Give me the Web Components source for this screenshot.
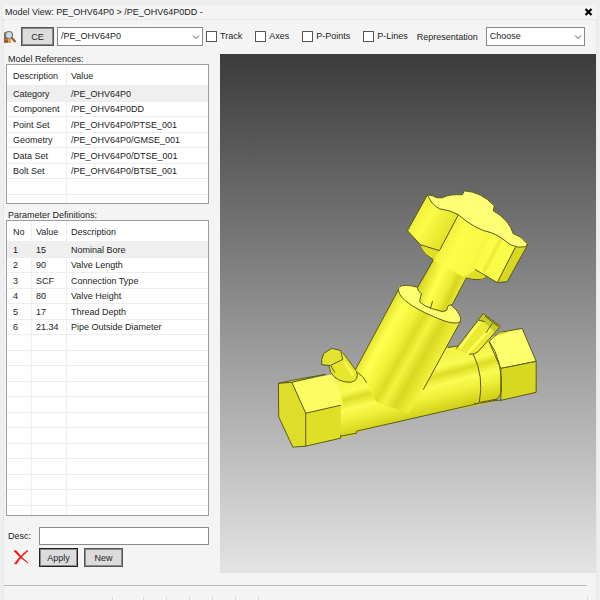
<!DOCTYPE html>
<html lang="en">
<head>
<meta charset="utf-8">
<title>Model View</title>
<style>
  html, body { height: 100%; }
  body { margin: 0; background: #eee; color: #1c1c1c; font: 9px/12px "Liberation Sans", Arial, sans-serif; }
</style>
</head>
<body>
<model-window heading="Model View: PE_OHV64P0 &gt; /PE_OHV64P0DD -">
  <view-toolbar slot="toolbar"></view-toolbar>
  <side-panel slot="side"></side-panel>
  <model-canvas slot="canvas"></model-canvas>
</model-window>

<script>
function define(name, html, setup) {
  const t = document.createElement('template');
  t.innerHTML = `<style>
    *, *::before { box-sizing: border-box; }
    button, select, input { font: inherit; color: inherit; margin: 0; border-radius: 0; }
    button { height: 19px; padding: 0; background: #dcdcdc; border: 1px solid #555; outline: 1px solid #8a8a8a; outline-offset: -2px; }
  </style>` + html;
  customElements.define(name, class extends HTMLElement {
    constructor() {
      super();
      this.attachShadow({ mode: 'open' }).append(t.content.cloneNode(true));
    }
    connectedCallback() { if (setup) setup(this, this.shadowRoot); }
  });
}

define('model-window', `
<style>
  :host { display: flex; flex-direction: column; min-height: 100vh; box-sizing: border-box; padding: 5px 3px 0; }
  header { display: flex; align-items: center; justify-content: space-between; height: 15px; padding: 0 4px 0 2px; background: #f4f4f4; border-bottom: 1px dotted #dadada; }
  h1 { font: inherit; margin: 0; }
  header button { width: 9px; height: 9px; background: none; border: 0; outline: 0; display: flex; }
  .frame { flex: 1; display: flex; flex-direction: column; background: #f4f4f4; border: 1px dotted #dadada; border-width: 0 1px; }
  .main { flex: 1; display: grid; grid-template-columns: 216px 1fr; }
  hr { width: calc(100% - 9px); margin: 12px 9px 0 0; border: 0; border-top: 1px solid #b9b9b9; }
  footer { display: flex; align-items: flex-end; height: 14px; }
  footer i { height: 3px; border-right: 1px solid #d8d8d8; }
  footer i:nth-child(1) { width: 109px; } footer i:nth-child(2) { width: 31px; }
  footer i:nth-child(n+3) { width: 23px; } footer i:last-child { flex: 1; margin-right: 8px; }
</style>
<header><h1></h1>
  <button aria-label="Close"><svg width="9" height="9" viewBox="0 0 9 9"><path d="M1.5 1L7.5 7M7.5 1L1.5 7" stroke="#000" stroke-width="2.2"/></svg></button>
</header>
<div class="frame">
  <slot name="toolbar"></slot>
  <div class="main"><slot name="side"></slot><slot name="canvas"></slot></div>
  <hr>
  <footer><i></i><i></i><i></i><i></i><i></i><i></i><i></i><i></i></footer>
</div>`, (el, root) => { root.querySelector('h1').textContent = el.getAttribute('heading'); });

define('check-box', `
<style>
  :host { display: block; }
  label { display: flex; align-items: center; gap: 3px; white-space: nowrap; }
  input { appearance: none; width: 11px; height: 11px; background: #fff; border: 1px solid #555; }
  input:checked { background: #555; }
  span { padding-bottom: 2px; }
</style>
<label><input type="checkbox"><span><slot></slot></span></label>`);

define('drop-down', `
<style>
  :host { display: grid; align-items: center; }
  select, svg { grid-area: 1 / 1; }
  select { appearance: none; width: 100%; height: 19px; padding: 0 16px 2px 3px; background: #fff; border: 1px solid #8a8a8a; }
  svg { justify-self: end; margin-right: 3px; pointer-events: none; z-index: 1; }
</style>
<select><option></option></select>
<svg width="8" height="6" viewBox="0 0 8 6"><path d="M1 1.5L4 4.5L7 1.5" fill="none" stroke="#555"/></svg>`,
(el, root) => {
  root.querySelector('option').textContent = el.getAttribute('value');
  root.querySelector('select').setAttribute('aria-label', el.getAttribute('label'));
});

define('view-toolbar', `
<style>
  :host { display: flex; align-items: center; height: 33px; padding: 0 11px 1px 0; }
  .find { width: 12px; height: 14px; margin-right: 5px; }
  button { width: 33px; margin-right: 3px; }
  .name { width: 146px; margin-right: 3px; }
  .checks { display: flex; gap: 13px; margin-right: 9px; }
  .rep { flex: 1; margin-left: 8px; }
</style>
<svg class="find" viewBox="0 0 12 14">
  <path d="M0 2.5L2.5 1.5L4 3V13H0Z" fill="#b8743c"/><path d="M0 5H4M0 8H4M0 11H4" stroke="#6f4526"/>
  <circle cx="5" cy="5" r="3.5" fill="#c9dbe6" stroke="#777" stroke-width="1.2"/>
  <path d="M7.5 7.5L11.5 12" stroke="#93622e" stroke-width="2.2"/><path d="M4 9L7 8.5V13H4Z" fill="#d8a166"/>
</svg>
<button>CE</button>
<drop-down class="name" value="/PE_OHV64P0" label="Element"></drop-down>
<div class="checks"><check-box>Track</check-box><check-box>Axes</check-box><check-box>P-Points</check-box><check-box>P-Lines</check-box></div>
<span>Representation</span>
<drop-down class="rep" value="Choose" label="Representation"></drop-down>`);

define('data-grid', `
<style>
  :host { display: block; overflow: hidden; background: #fff; border: 1px solid #9a9ca3; box-sizing: border-box; }
  table { width: 100%; border-collapse: separate; border-spacing: 0; table-layout: fixed; }
  th, td { padding: 0 0 0 4px; font-weight: normal; text-align: left; white-space: nowrap; height: 15px; line-height: 12px; border-bottom: 1px solid #eee; }
  th:first-child, td:first-child { padding-left: 6px; }
  th:not(:last-child), td:not(:last-child) { border-right: 1px solid #eee; }
  th { height: 21px; padding-top: 2px; }
  tbody tr:nth-child(odd) td { height: 16px; }
  tbody tr:first-child td { background: #efefef; }
</style>
<table><colgroup></colgroup><thead><tr></tr></thead><tbody></tbody></table>`,
(el, root) => {
  const cols = el.getAttribute('columns').split(','), widths = el.getAttribute('widths').split(',');
  const rows = el.textContent.trim().split('\n').map(r => r.trim().split('|'));
  for (let i = +el.getAttribute('blank'); i > 0; i--) rows.push(cols.map(() => ''));
  root.querySelector('colgroup').innerHTML = cols.map((c, i) => `<col${widths[i] ? ` style="width:${widths[i]}px"` : ''}>`).join('');
  root.querySelector('thead tr').innerHTML = cols.map(c => `<th scope="col">${c}</th>`).join('');
  root.querySelector('tbody').innerHTML = rows.map(r => `<tr>${r.map(c => `<td>${c}</td>`).join('')}</tr>`).join('');
});

define('side-panel', `
<style>
  :host { display: flex; flex-direction: column; padding: 0 11px 6px 2px; }
  h2 { font: inherit; line-height: 10px; margin: 0; padding-left: 2px; }
  .refs { height: 140px; margin-bottom: 6px; }
  .params { flex: 1 1 0; min-height: 120px; }
  form { display: grid; grid-template-columns: 28px 1fr; gap: 3px 4px; align-items: center; padding: 11px 0 0 1px; }
  label { padding-left: 1px; }
  input { width: 100%; height: 18px; background: #fff; border: 1px solid #8a8a8a; }
  .actions { display: flex; gap: 6px; }
  .actions button { width: 39px; } .actions button:first-child { border-color: #222; }
  .del { width: 16px; height: 16px; border: 0; outline: 0; background: none; justify-self: center; }
  .del svg { display: block; }
</style>
<h2>Model References:</h2>
<data-grid class="refs" columns="Description,Value" widths="60," blank="2">
  Category|/PE_OHV64P0
  Component|/PE_OHV64P0DD
  Point Set|/PE_OHV64P0/PTSE_001
  Geometry|/PE_OHV64P0/GMSE_001
  Data Set|/PE_OHV64P0/DTSE_001
  Bolt Set|/PE_OHV64P0/BTSE_001
</data-grid>
<h2>Parameter Definitions:</h2>
<data-grid class="params" columns="No,Value,Description" widths="25,35," blank="12">
  1|15|Nominal Bore
  2|90|Valve Length
  3|SCF|Connection Type
  4|80|Valve Height
  5|17|Thread Depth
  6|21.34|Pipe Outside Diameter
</data-grid>
<form onsubmit="return false">
  <label for="desc">Desc:</label><input id="desc">
  <button class="del" type="button" aria-label="Delete"><svg width="16" height="16" viewBox="0 0 16 16"><path d="M1 1L3 0.5Q8 7 15 13Q7 8 1 1ZM14 0.5L15 1Q7 7 3.5 14L1.5 13.5Q7 6 14 0.5Z" fill="#f01810" stroke="#f01810" stroke-width=".7"/></svg></button>
  <div class="actions"><button type="button">Apply</button><button type="button">New</button></div>
</form>`);

define('model-canvas', `
<style>
  :host { display: flex; background: linear-gradient(#3b3b3b, #e4e4e4); }
  svg { width: 100%; height: auto; }
  .edge, [stroke="#45450c"] { stroke: #5a5a18; }
</style>
<svg viewBox="220 53 377 520" role="img" aria-label="Valve model" stroke-linejoin="round" stroke-linecap="round">
  <defs>
    <linearGradient id="pipe" gradientUnits="userSpaceOnUse" x1="395" y1="350" x2="413" y2="418">
      <stop offset="0" stop-color="#e5e52c"/><stop offset=".2" stop-color="#f3f341"/><stop offset=".4" stop-color="#fafa54"/><stop offset=".5" stop-color="#dddd25"/><stop offset=".64" stop-color="#fbfb52"/><stop offset=".8" stop-color="#eeee38"/><stop offset="1" stop-color="#d2d21d"/>
    </linearGradient>
    <linearGradient id="cyl" gradientUnits="userSpaceOnUse" x1="378" y1="328" x2="438" y2="362">
      <stop offset="0" stop-color="#e4e42b"/><stop offset=".15" stop-color="#ffff50"/><stop offset=".35" stop-color="#f3f33c"/><stop offset=".5" stop-color="#dcdc23"/><stop offset=".62" stop-color="#f4f440"/><stop offset=".78" stop-color="#d8d822"/><stop offset="1" stop-color="#f2f23a"/>
    </linearGradient>
    <linearGradient id="stem" gradientUnits="userSpaceOnUse" x1="424" y1="278" x2="460" y2="294">
      <stop offset="0" stop-color="#dada22"/><stop offset=".35" stop-color="#ffff4e"/><stop offset=".65" stop-color="#ecec36"/><stop offset=".8" stop-color="#d5d51e"/><stop offset="1" stop-color="#efef37"/>
    </linearGradient>
    <linearGradient id="hub" gradientUnits="userSpaceOnUse" x1="440" y1="228" x2="500" y2="262">
      <stop offset="0" stop-color="#e9e933"/><stop offset=".35" stop-color="#fdfd4b"/><stop offset=".75" stop-color="#f6f642"/><stop offset="1" stop-color="#eaea30"/>
    </linearGradient>
    <linearGradient id="wing" gradientUnits="userSpaceOnUse" x1="414" y1="212" x2="448" y2="232">
      <stop offset="0" stop-color="#eeee36"/><stop offset=".4" stop-color="#fbfb4a"/><stop offset="1" stop-color="#e4e42a"/>
    </linearGradient>
  </defs>
  <!-- run pipe -->
  <path d="M326 376L356 370L390 360L449 347L462 345L476 350L490 338Q508 366 501 396Q495 402 486 403L479 405L420 416L357 432L356 435L340 438Z" fill="url(#pipe)"/>
  <path d="M449 347L462 345M341 436L357 433L357 431L480 403L498 400" fill="none" stroke="#45450c"/>
  <path d="M474 354Q485 376 480 402Q477 405 475 403M481 402L497 399" fill="none" stroke="#45450c"/>
  <!-- left hex end -->
  <path d="M292 382L333 374L341 390V405L306 413Z" fill="#fcfc62"/>
  <path d="M279 383L292 380L326 374L292 382Z" fill="#dada2e" stroke="#45450c"/>
  <path d="M306 413L341 405V438L306 446Z" fill="#dfdf28"/>
  <path d="M279 383L292 382L306 413V446L293 447L279 417Z" fill="#dede2a" stroke="#45450c"/>
  <path d="M306 413L341 405M306 446L341 438V435" fill="none" stroke="#45450c"/>
  <path d="M334 374L342 373L343 406L341 405V390Z" fill="#f5f54a"/>
  <!-- left nipple -->
  <path d="M329 364L331 372Q337 382 351 382Q360 380 357 371L343 351Z" fill="#e6e62f"/>
  <path d="M345 362L353 374" stroke="#f8f84c" stroke-width="3"/>
  <path d="M329 365L331 372Q337 382 351 382Q360 380 357 371L343 352M331 365L335 372" fill="none" stroke="#45450c"/>
  <path d="M322 364V359L324 353L332 348L341 350L343 359L331 365Z" fill="#e2e233" stroke="#45450c"/>
  <!-- right hex end -->
  <path d="M490 341L500 332L523 328L537 361L502 368Z" fill="#ffff6b" stroke="#45450c"/>
  <path d="M490 341L500 332L512 331L493 336Z" fill="#caca28"/>
  <path d="M502 368L537 361V392L502 400Z" fill="#d8d823" stroke="#45450c"/>
  <path d="M490 341Q504 360 502 392Q499 400 494 400L502 400" fill="none" stroke="#45450c"/>
  <!-- right nipple -->
  <path d="M484 313L501 326L479 352Q471 357 457 348Z" fill="#eaea32"/>
  <path d="M482 319L461 347M491 328L469 352" stroke="#fbfb5c" stroke-width="3"/>
  <path d="M484 313L501 326L496 332L484 321L479 320Z" fill="#c9c925"/>
  <path d="M457 348L484 313L501 326L479 351Q476 354 470 354M486 316L499 326M493 323L487 332M480 320L485 321" fill="none" stroke="#45450c"/>
  <!-- bonnet cylinder -->
  <path d="M399 289L356 369L364 380L377 402L409 413L424 389L461 321Z" fill="url(#cyl)"/>
  <path d="M399 289L356 369M358 372Q363 375 367 382M461 321L424 389" fill="none" stroke="#45450c"/>
  <path d="M399 289C398 283 411 284 422 288C445 296 464 312 461 321C455 326 438 318 425 312C407 303 399 296 399 289Z" fill="#ffff70" stroke="#45450c"/>
  <!-- stem -->
  <path d="M421 244L434 260L418 288Q419 291 422 293L420 301L432 308L443 312L448 310L449 305L453 304L467 277L484 279L487 272Z" fill="url(#stem)"/>
  <path d="M421 244Q424 254 434 259L418 287Q418 291 422 293L420 301Q425 306 432 308L443 311L447 310L449 305L453 304L467 277Q477 281 487 277M433 301L431 308" fill="none" stroke="#45450c"/>
  <path d="M421 244Q425 257 440 259L440 250Z" fill="#dfdf28"/>
  <path d="M467 277Q477 280 487 277L476 269Z" fill="#dede27"/>
  <!-- handwheel -->
  <path d="M459 214L440 250L434 260L463 276L476 269L516 246L492 232Z" fill="url(#hub)"/>
  <path d="M492 232L476 269L498 282L516 246Z" fill="#fbfb49"/>
  <path d="M501 240L485 270" stroke="#efef38" stroke-width="4"/>
  <path d="M516 246L528 245L508 281L498 282Z" fill="#d7d724"/>
  <path d="M476 269L498 282L508 281L528 245M498 282L516 247" fill="none" stroke="#45450c"/>
  <path d="M428 194L408 230L421 244L440 250L459 214Z" fill="url(#wing)" stroke="#45450c"/>
  <path d="M428 194L433 195Q438 198 443 197Q450 193 463 194L465 190Q482 191 495 205L494 210Q510 219 514 233Q522 235 528 243L527 246Q519 248 511 244Q500 235 492 232Q476 229 459 214Q450 209 440 208Q432 204 428 194Z" fill="#ffff75" stroke="#45450c"/>
</svg>`);
</script>
</body>
</html>
